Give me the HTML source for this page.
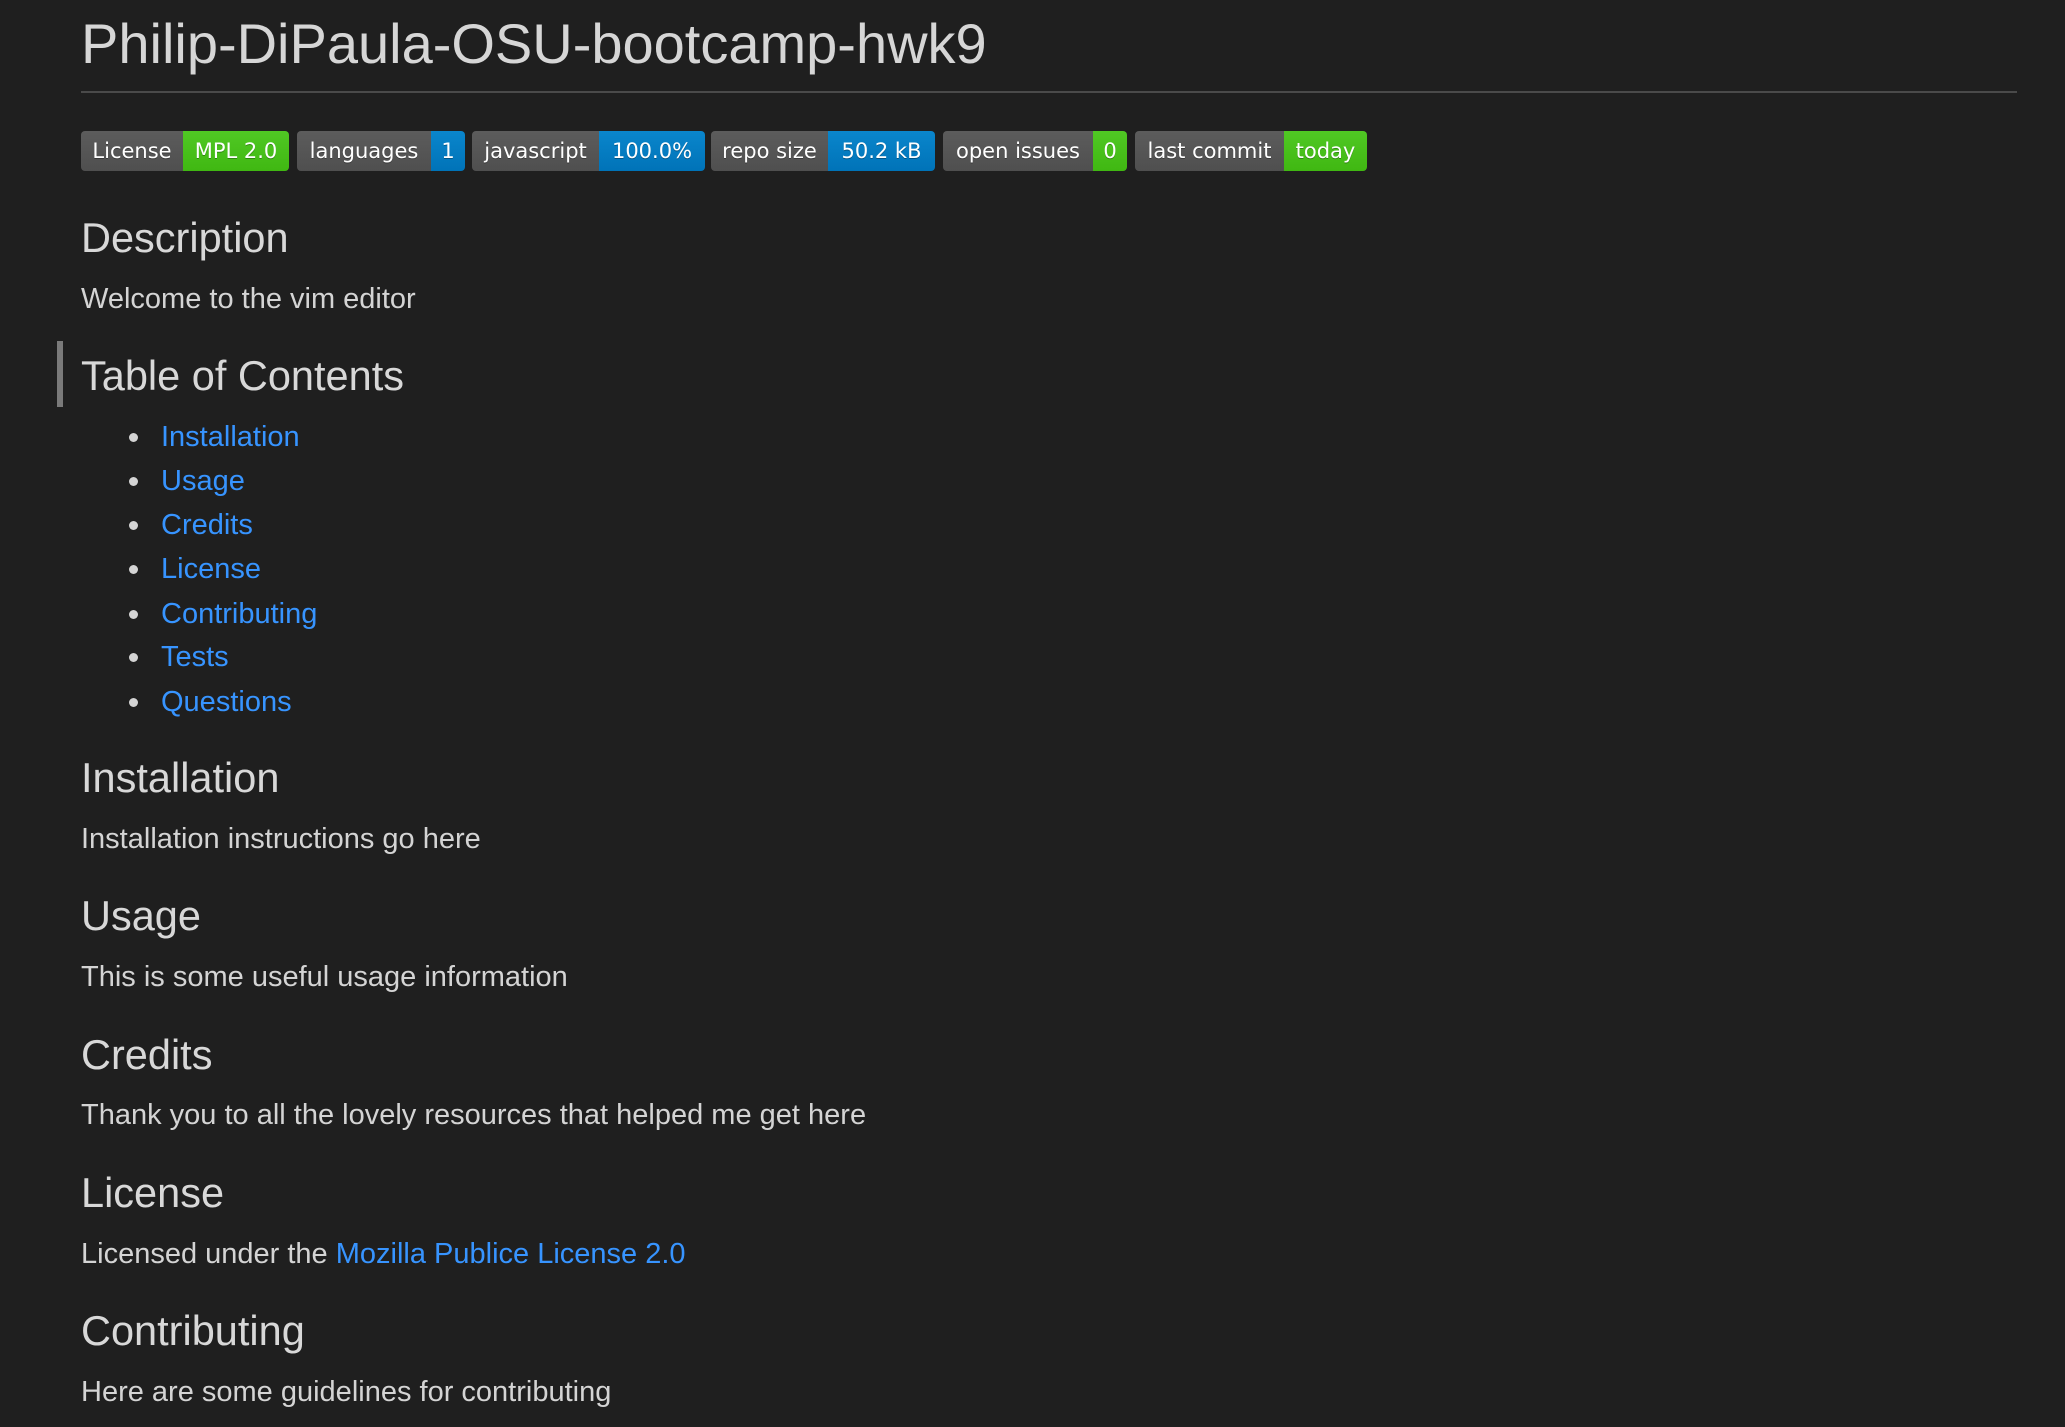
<!DOCTYPE html>
<html><head><meta charset="utf-8"><style>
html,body{margin:0;padding:0;background:#1f1f1f;width:2065px;height:1427px;overflow:hidden}
body{position:relative;font-family:"Liberation Sans",sans-serif;color:#d4d4d4}
.t{position:absolute;left:81px;white-space:nowrap;line-height:1}
h1{position:absolute;left:81px;top:14px;margin:0;font-weight:normal;font-size:56px;line-height:60px;color:#d6d6d6}
.hr{position:absolute;left:81px;top:91px;width:1936px;height:2px;background:#4a4a4a}
.badge{position:absolute;top:131px;height:40px;display:flex;border-radius:4px;overflow:hidden;font-family:"DejaVu Sans",sans-serif;font-size:21px;color:#fff;text-shadow:0 1px 0 rgba(1,1,1,.3)}
.badge span{display:flex;align-items:center;justify-content:center;height:40px}
.l{background:linear-gradient(#5c5c5c,#4f4f4f)}
.g{background:linear-gradient(#50c824,#40b812)}
.b{background:linear-gradient(#0a86cc,#0073b8)}
.h{font-size:41.5px;color:#d8d8d8}
.p{font-size:29px}
a{color:#3794ff;text-decoration:none}
.li{position:absolute;left:161px;font-size:29px;line-height:1;color:#3794ff}
.dot{position:absolute;left:129px;width:9px;height:9px;border-radius:50%;background:#d4d4d4}
.bar{position:absolute;left:57px;top:341px;width:6px;height:66px;background:#7a7a7a}
</style></head><body>
<h1>Philip-DiPaula-OSU-bootcamp-hwk9</h1>
<div class="hr"></div>
<div class="badge" style="left:81px;width:208px"><span class="l" style="width:102px">License</span><span class="g" style="width:106px">MPL 2.0</span></div>
<div class="badge" style="left:297px;width:168px"><span class="l" style="width:134px">languages</span><span class="b" style="width:34px">1</span></div>
<div class="badge" style="left:472px;width:233px"><span class="l" style="width:127px">javascript</span><span class="b" style="width:106px">100.0%</span></div>
<div class="badge" style="left:711px;width:224px"><span class="l" style="width:117px">repo size</span><span class="b" style="width:107px">50.2 kB</span></div>
<div class="badge" style="left:943px;width:184px"><span class="l" style="width:150px">open issues</span><span class="g" style="width:34px">0</span></div>
<div class="badge" style="left:1135px;width:232px"><span class="l" style="width:149px">last commit</span><span class="g" style="width:83px">today</span></div>

<div class="t h" style="top:217px">Description</div>
<div class="t p" style="top:285px">Welcome to the vim editor</div>
<div class="bar"></div>
<div class="t h" style="top:355px">Table of Contents</div>

<div class="dot" style="top:433px"></div><div class="li" style="top:423px">Installation</div>
<div class="dot" style="top:477px"></div><div class="li" style="top:467px">Usage</div>
<div class="dot" style="top:521px"></div><div class="li" style="top:511px">Credits</div>
<div class="dot" style="top:565px"></div><div class="li" style="top:555px">License</div>
<div class="dot" style="top:610px"></div><div class="li" style="top:600px">Contributing</div>
<div class="dot" style="top:653px"></div><div class="li" style="top:643px">Tests</div>
<div class="dot" style="top:698px"></div><div class="li" style="top:688px">Questions</div>

<div class="t h" style="top:757px">Installation</div>
<div class="t p" style="top:825px">Installation instructions go here</div>
<div class="t h" style="top:895px">Usage</div>
<div class="t p" style="top:963px">This is some useful usage information</div>
<div class="t h" style="top:1034px">Credits</div>
<div class="t p" style="top:1101px">Thank you to all the lovely resources that helped me get here</div>
<div class="t h" style="top:1172px">License</div>
<div class="t p" style="top:1240px">Licensed under the <a>Mozilla Publice License 2.0</a></div>
<div class="t h" style="top:1310px">Contributing</div>
<div class="t p" style="top:1378px">Here are some guidelines for contributing</div>
</body></html>
